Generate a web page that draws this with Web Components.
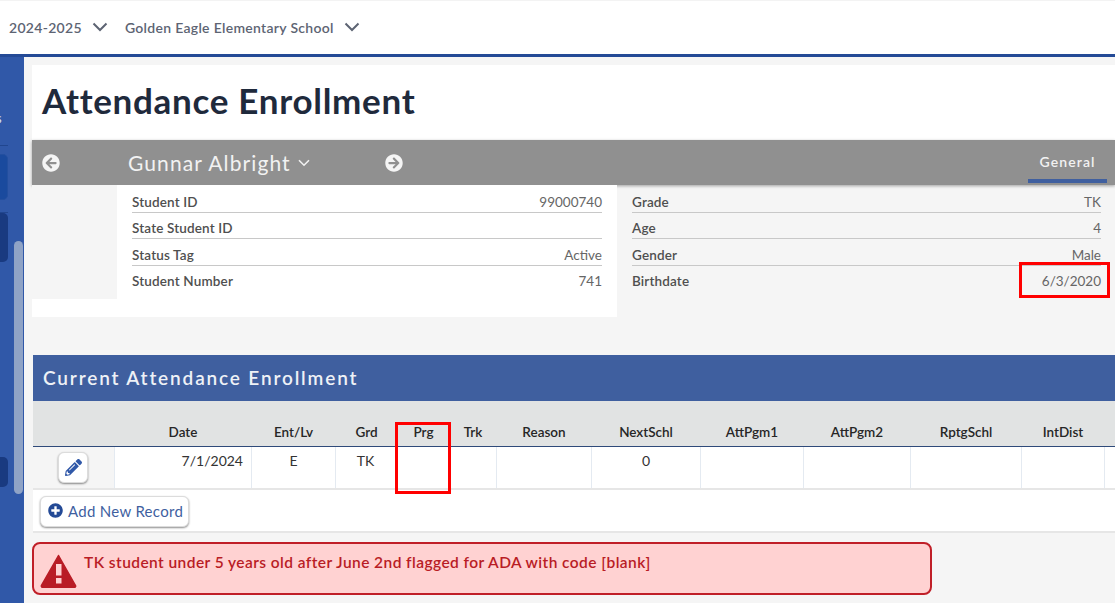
<!DOCTYPE html>
<html>
<head>
<meta charset="utf-8">
<style>
html,body{margin:0;height:603px;overflow:hidden;background:#f5f5f5;}
body{font-family:"Lato","Liberation Sans",sans-serif;color:#555;}
#shell{display:flex;height:546px;}
#main{flex:1;min-width:0;padding:8px 0 0 8px;position:relative;}
</style>
</head>
<body>
<top-bar></top-bar>
<div id="shell">
  <side-bar></side-bar>
  <div id="main">
    <page-title>Attendance Enrollment</page-title>
    <student-bar name="Gunnar Albright" tab="General"></student-bar>
    <student-info></student-info>
    <enrollment-table></enrollment-table>
    <alert-box>TK student under 5 years old after June 2nd flagged for ADA with code [blank]</alert-box>
  </div>
</div>

<script>
function makeEl(name, html, setup){
  const tpl = document.createElement('template');
  tpl.innerHTML = html;
  customElements.define(name, class extends HTMLElement{
    constructor(){
      super();
      this.attachShadow({mode:"open"});
      this.shadowRoot.appendChild(tpl.content.cloneNode(true));
    }
    connectedCallback(){ if(setup) setup(this, this.shadowRoot); }
  });
}

const CHEV = `<svg width="16" height="10" viewBox="0 0 16 10" fill="none" stroke="#5d6473" stroke-width="2"><path d="M1.5 1.5L8 8l6.5-6.5"/></svg>`;

makeEl('top-bar', `<style>
:host{display:flex;align-items:center;height:52px;background:#fff;border-top:1px solid #f3f3f3;border-bottom:3px solid #244a96;box-sizing:content-box;padding:0 0 1px 9px;font-size:14px;font-weight:600;color:#5d6473;letter-spacing:.3px;}
span{display:block;}
svg{margin-left:10px;margin-right:17px;}
</style><span>2024-2025</span>${CHEV}<span>Golden Eagle Elementary School</span>${CHEV}`);

makeEl('side-bar', `<style>
:host{display:flex;flex-direction:column;width:24px;flex:none;background:#3058a8;position:relative;overflow:hidden;}
.s{position:absolute;left:-4px;top:53px;font-size:13px;color:#dfe6f3;}
.rule{position:absolute;left:0;top:88px;width:8px;height:1px;background:#21468f;}
.tab{position:absolute;left:-8px;width:16px;border-radius:5px;}
.a{top:97px;height:46px;background:#1a4a9e;border:1px solid #234f9f;box-sizing:border-box;}
.b{top:156px;height:49px;background:#193a80;}
.c{top:400px;height:30px;background:#193a80;}
.rule2{position:absolute;left:0;top:155px;width:8px;height:1px;background:#21468f;}
.thumb{position:absolute;left:14px;top:184px;width:9px;height:253px;border-radius:5px;background:#8fa3c6;}
</style><span class="s">s</span><i class="rule"></i><i class="tab a"></i><i class="rule2"></i><i class="tab b"></i><i class="tab c"></i><i class="thumb"></i>`);

makeEl('page-title', `<style>
:host{display:flex;align-items:center;height:75px;background:#fff;padding:0 0 6px 10px;box-sizing:border-box;font-size:35px;font-weight:700;letter-spacing:.7px;color:#1f2a3c;}
</style><slot></slot>`);

makeEl('student-bar', `<style>
:host{display:flex;height:45px;background:#909090;color:#f2f2f2;align-items:center;position:relative;box-shadow:0 1px 3px rgba(0,0,0,.35);}
svg.nav{width:18px;height:18px;fill:#f5f5f5;flex:none;}
.prev{margin-left:10px;}
.name{margin-left:68px;width:257px;font-size:21px;letter-spacing:1.1px;display:flex;align-items:center;gap:7px;}
.name svg{margin-top:1px;}
.tab{position:absolute;right:8px;top:0;bottom:0;width:79px;display:flex;align-items:center;justify-content:center;font-size:14px;font-weight:600;letter-spacing:1.1px;box-sizing:border-box;padding-bottom:2px;}
.tab::after{content:"";position:absolute;left:0;right:0;bottom:2px;height:4px;background:#3f5f9f;}
</style>
<svg class="nav prev" viewBox="0 0 512 512"><path d="M256 504C119 504 8 393 8 256S119 8 256 8s248 111 248 248-111 248-248 248zm28.9-143.6L209.4 288H392c13.3 0 24-10.7 24-24v-16c0-13.3-10.7-24-24-24H209.4l75.5-72.4c9.7-9.3 9.9-24.8.4-34.3l-11-10.9c-9.4-9.4-24.6-9.4-33.9 0L107.7 239c-9.4 9.4-9.4 24.6 0 33.9l132.7 132.7c9.4 9.4 24.6 9.4 33.9 0l11-10.9c9.5-9.5 9.3-25-.4-34.3z"/></svg>
<div class="name"><span id="n"></span><svg width="12" height="8" viewBox="0 0 12 8" fill="none" stroke="#f2f2f2" stroke-width="1.6"><path d="M1 1.2l5 5 5-5"/></svg></div>
<svg class="nav" viewBox="0 0 512 512"><path d="M256 8c137 0 248 111 248 248S393 504 256 504 8 393 8 256 119 8 256 8zm-28.9 143.6l75.5 72.4H120c-13.3 0-24 10.7-24 24v16c0 13.3 10.7 24 24 24h182.6l-75.5 72.4c-9.7 9.3-9.9 24.8-.4 34.3l11 10.9c9.4 9.4 24.6 9.4 33.9 0L404.3 273c9.4-9.4 9.4-24.6 0-33.9L271.6 106.3c-9.4-9.4-24.6-9.4-33.9 0l-11 10.9c-9.5 9.6-9.3 25.1.4 34.4z"/></svg>
<div class="tab" id="t"></div>`, (el, root) => {
  root.getElementById('n').textContent = el.getAttribute('name');
  root.getElementById('t').textContent = el.getAttribute('tab');
});

makeEl('info-row', `<style>
:host{display:flex;justify-content:space-between;align-items:flex-end;height:26.5px;padding-bottom:2px;box-sizing:border-box;border-bottom:1px solid #c8c8c8;font-size:13.5px;color:#666;}
:host(:last-child){border-bottom:0;padding-bottom:3px;}
b{font-weight:600;color:#4f4f4f;letter-spacing:.15px;}
</style><b id="l"></b><span id="v"></span>`, (el, root) => {
  root.getElementById('l').textContent = el.getAttribute('label');
  root.getElementById('v').textContent = el.getAttribute('value') || '';
});

makeEl('red-mark', `<style>
:host{display:block;position:absolute;border:3px solid #f00;box-sizing:border-box;pointer-events:none;}
</style>`);

makeEl('student-info', `<style>
:host{display:flex;height:132px;position:relative;}
.left{width:585px;background:#fff;padding-bottom:18px;display:flex;box-sizing:border-box;}
.photo{width:85px;background:#f5f5f5;flex:none;}
.rows{flex:1;padding:1px 15px 0 15px;min-width:0;}
.right{flex:1;padding:1px 14px 0 15px;}
red-mark{right:5px;top:77px;width:91px;height:36px;}
</style>
<div class="left"><div class="photo"></div><div class="rows">
<info-row label="Student ID" value="99000740"></info-row>
<info-row label="State Student ID"></info-row>
<info-row label="Status Tag" value="Active"></info-row>
<info-row label="Student Number" value="741"></info-row>
</div></div>
<div class="right">
<info-row label="Grade" value="TK"></info-row>
<info-row label="Age" value="4"></info-row>
<info-row label="Gender" value="Male"></info-row>
<info-row label="Birthdate" value="6/3/2020"></info-row>
</div>
<red-mark></red-mark>`);

makeEl('add-button', `<style>
:host{display:inline-flex;align-items:center;gap:5px;width:149px;height:31px;box-sizing:border-box;padding:0 0 1px 7px;background:#fff;border:1px solid #dcdcdc;border-radius:6px;box-shadow:0 1px 2px rgba(0,0,0,.45);font-size:15px;letter-spacing:.3px;color:#3f5f9f;}
svg{width:15px;height:15px;fill:#244a96;margin-top:-2px;}
</style><svg viewBox="0 0 512 512"><path d="M256 8C119 8 8 119 8 256s111 248 248 248 248-111 248-248S393 8 256 8zm144 276c0 6.6-5.4 12-12 12h-92v92c0 6.6-5.4 12-12 12h-56c-6.6 0-12-5.4-12-12v-92h-92c-6.6 0-12-5.4-12-12v-56c0-6.6 5.4-12 12-12h92v-92c0-6.6 5.4-12 12-12h56c6.6 0 12 5.4 12 12v92h92c6.6 0 12 5.4 12 12v56z"/></svg><slot></slot>`);

const COLS = "82px 137px 84px 62px 52px 47px 95px 109px 103px 107px 111px 83px 11px";
const HEADS = ["","Date","Ent/Lv","Grd","Prg","Trk","Reason","NextSchl","AttPgm1","AttPgm2","RptgSchl","IntDist",""];
const CELLS = ["","7/1/2024","E","TK","","","","0","","","","",""];

makeEl('enrollment-table', `<style>
:host{display:block;margin-top:38px;margin-left:1px;position:relative;background:#fff;}
h2{margin:0;height:46px;display:flex;align-items:center;padding:0 0 2px 10px;box-sizing:border-box;background:#3f5f9f;color:#eef1f6;font-size:19px;font-weight:600;letter-spacing:1.85px;}
.grid{display:grid;grid-template-columns:${COLS};}
.head{height:46px;background:#e1e3e3;border-bottom:1px solid #2f4a7a;box-sizing:border-box;}
.head div{align-self:end;text-align:center;font-size:13.5px;font-weight:600;color:#262626;padding:0 1px 6px 0;white-space:nowrap;}
.row{height:43px;border-bottom:2px solid #e6e6e6;box-sizing:border-box;}
.row div{border-right:1px solid #e4eaf1;font-size:14px;color:#333;text-align:center;padding-top:5px;box-sizing:border-box;}
.row div:nth-child(1){background:#f5f5f5;padding-top:5px;}
.row div:nth-child(2){text-align:right;padding-right:8px;}
.row div:nth-child(5),.row div:nth-child(4){border-right-color:transparent;}
.row div:nth-child(4){padding-right:2px;}
.row div:last-child{border-right:0;}
.edit{display:block;width:30px;height:31px;margin:0 auto 0 25px;background:#fff;border:1px solid #dcdcdc;border-radius:6px;box-shadow:0 1px 2px rgba(0,0,0,.45);box-sizing:border-box;}
.edit svg{display:block;width:17px;height:17px;margin:6px 0 0 6px;fill:#3058a8;}
.foot{height:43px;padding:6px 0 0 7px;box-sizing:border-box;border-bottom:2px solid #e6e6e6;}
red-mark{left:362px;top:67px;width:56px;height:72px;}
</style>
<h2>Current Attendance Enrollment</h2>
<div class="grid head" id="h"></div>
<div class="grid row" id="r"></div>
<div class="foot"><add-button>Add New Record</add-button></div>
<red-mark></red-mark>`, (el, root) => {
  const h = root.getElementById('h'), r = root.getElementById('r');
  HEADS.forEach(t => { const d = document.createElement('div'); d.textContent = t; h.appendChild(d); });
  CELLS.forEach((t, i) => {
    const d = document.createElement('div');
    if(i == 0){
      d.innerHTML = `<span class="edit"><svg viewBox="0 0 512 512"><path d="M497.9 142.1l-46.1 46.1c-4.7 4.7-12.3 4.7-17 0l-111-111c-4.7-4.7-4.7-12.3 0-17l46.1-46.1c18.7-18.7 49.1-18.7 67.9 0l60.1 60.1c18.8 18.7 18.8 49.1 0 67.9zM284.2 99.8L21.6 362.4.4 483.9c-2.9 16.4 11.4 30.6 27.8 27.8l121.5-21.3 262.6-262.6c4.7-4.7 4.7-12.3 0-17l-111-111c-4.8-4.7-12.4-4.7-17.1 0zM124.1 339.9c-5.5-5.5-5.5-14.3 0-19.8l154-154c5.5-5.5 14.3-5.5 19.8 0s5.5 14.3 0 19.8l-154 154c-5.5 5.5-14.3 5.5-19.8 0zM88 424h48v36.3l-64.5 11.3-31.1-31.1L51.7 376H88v48z"/></svg></span>`;
    } else d.textContent = t;
    r.appendChild(d);
  });
});

makeEl('alert-box', `<style>
:host{display:flex;align-items:flex-start;margin-top:9px;width:900px;height:53px;box-sizing:border-box;background:#ffd2d2;border:2px solid #c01f28;border-radius:8px;color:#b91c25;font-size:15.5px;font-weight:600;letter-spacing:.43px;}
svg{width:37px;height:34px;margin:10px 0 0 6px;flex:none;}
span{margin:9px 0 0 7px;}
</style><svg viewBox="0 0 37 34"><path d="M18.5 1.5L35.5 31.5a1.2 1.2 0 0 1-1 1.8H2.5a1.2 1.2 0 0 1-1-1.8z" fill="#b91c25" stroke="#b91c25" stroke-width="1.5" stroke-linejoin="round"/><rect x="16" y="10" width="5.5" height="11.5" fill="#ffd2d2"/><rect x="16" y="24" width="5.5" height="5.5" fill="#ffd2d2"/></svg><span><slot></slot></span>`);
</script>
</body>
</html>
